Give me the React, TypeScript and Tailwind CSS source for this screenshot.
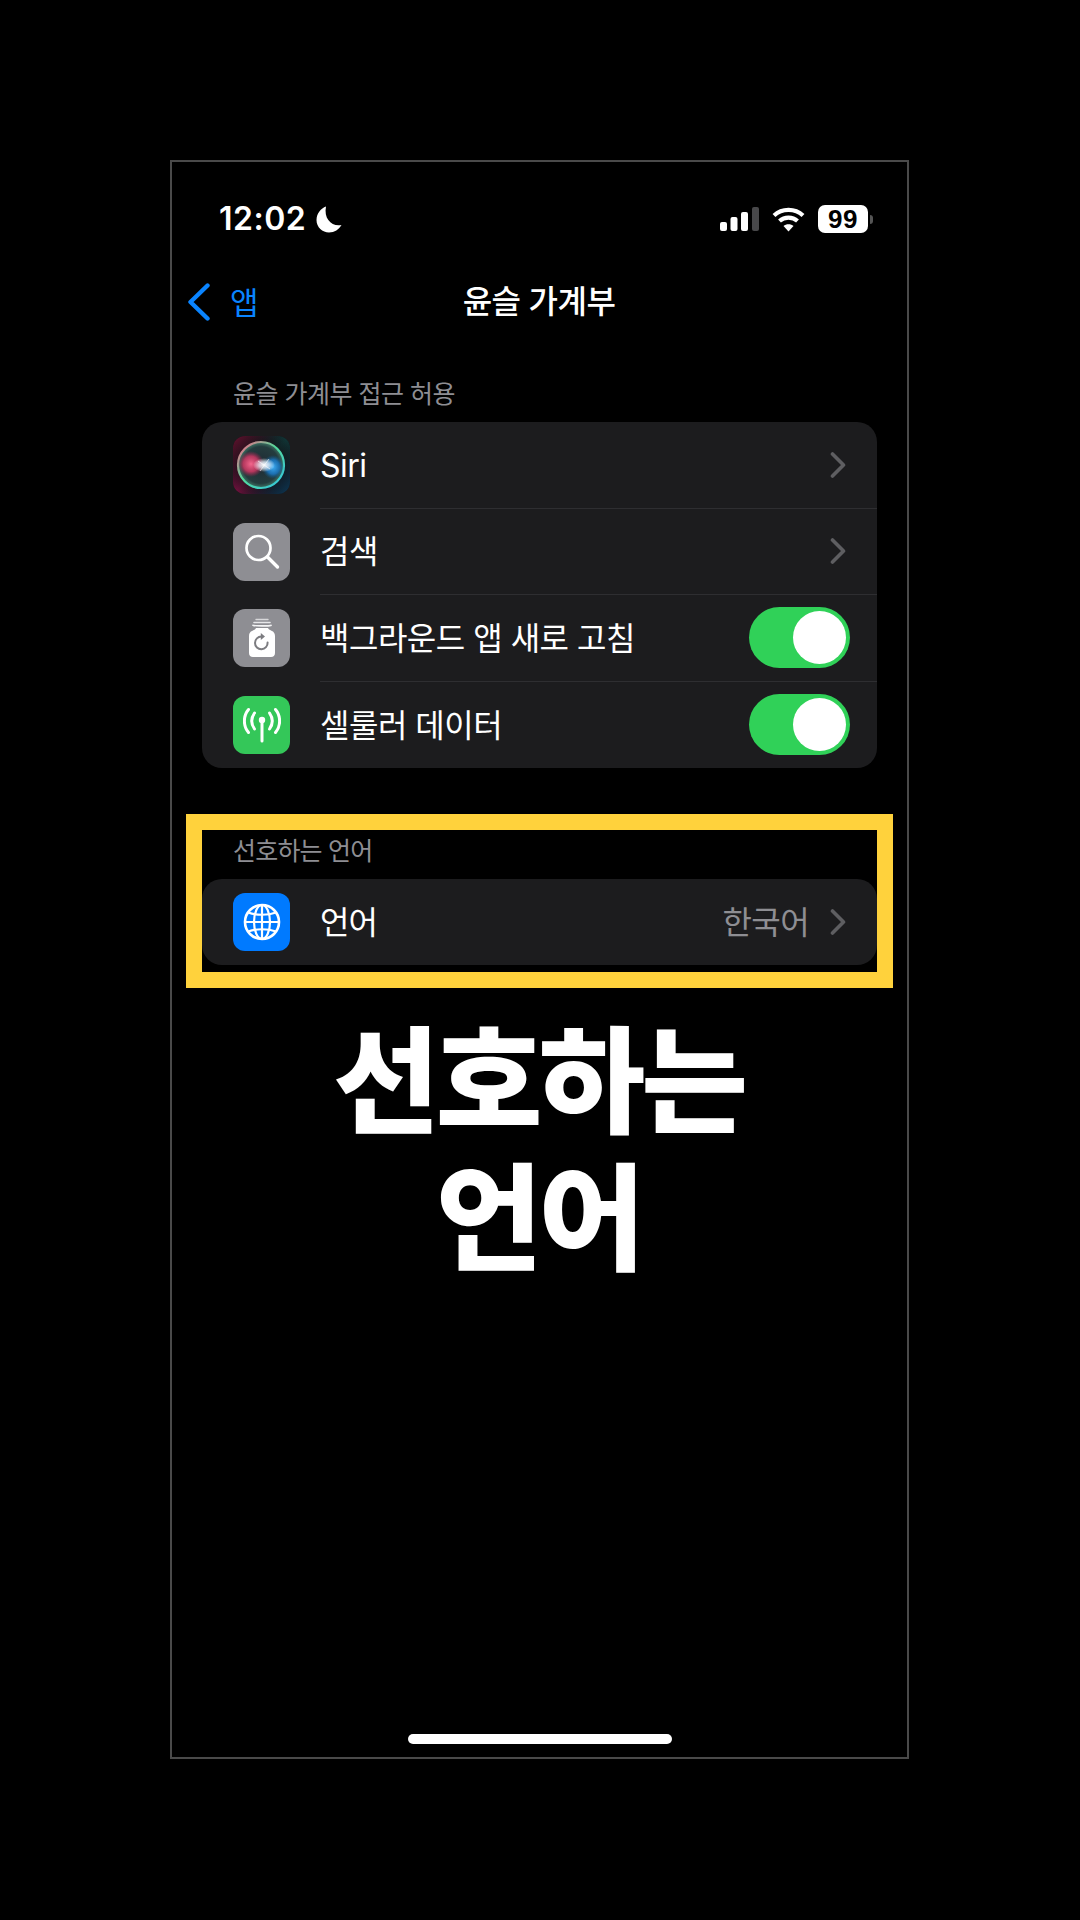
import React from "react";

const font = "font-['Inter','Noto_Sans_CJK_KR',sans-serif]";

function Chevron() {
  return (
    <svg width="16" height="26" viewBox="0 0 16 26" fill="none" className="shrink-0">
      <path d="M2.5 2 L13.5 13 L2.5 24" stroke="#5e5e61" strokeWidth="3.6" strokeLinecap="round" strokeLinejoin="round" />
    </svg>
  );
}

function Toggle() {
  return (
    <div className="w-[101px] h-[61px] rounded-full bg-[#30d158] flex items-center justify-end pr-[4px] shrink-0">
      <div className="w-[53px] h-[53px] rounded-full bg-white" />
    </div>
  );
}

function SiriIcon() {
  return (
    <svg width="57" height="58" viewBox="0 0 57 58">
      <defs>
        <linearGradient id="sb2" x1="0" y1="1" x2="1" y2="0">
          <stop offset="0" stopColor="#8a1048" />
          <stop offset="0.5" stopColor="#101014" stopOpacity="0" />
          <stop offset="1" stopColor="#0f4040" />
        </linearGradient>
        <linearGradient id="sb3" x1="0" y1="0" x2="1" y2="1">
          <stop offset="0" stopColor="#6a1030" />
          <stop offset="0.5" stopColor="#101014" stopOpacity="0" />
          <stop offset="1" stopColor="#0c3a5a" />
        </linearGradient>
        <linearGradient id="sr" x1="0" y1="0" x2="1" y2="1">
          <stop offset="0" stopColor="#ff5c84" />
          <stop offset="0.45" stopColor="#55d89a" />
          <stop offset="1" stopColor="#2fc4e4" />
        </linearGradient>
        <radialGradient id="sp">
          <stop offset="0" stopColor="#ff6a92" stopOpacity="0.95" />
          <stop offset="0.6" stopColor="#d83866" stopOpacity="0.8" />
          <stop offset="1" stopColor="#b02050" stopOpacity="0" />
        </radialGradient>
        <radialGradient id="sc">
          <stop offset="0" stopColor="#40b4ff" stopOpacity="0.95" />
          <stop offset="0.6" stopColor="#1a7ccc" stopOpacity="0.8" />
          <stop offset="1" stopColor="#0a5a90" stopOpacity="0" />
        </radialGradient>
        <radialGradient id="sw">
          <stop offset="0" stopColor="#ffffff" />
          <stop offset="0.45" stopColor="#eef6ff" stopOpacity="0.75" />
          <stop offset="1" stopColor="#ffffff" stopOpacity="0" />
        </radialGradient>
        <radialGradient id="si">
          <stop offset="0" stopColor="#1f2a34" />
          <stop offset="0.8" stopColor="#243c3e" />
          <stop offset="1" stopColor="#3f7a68" />
        </radialGradient>
      </defs>
      <rect width="57" height="58" rx="12" fill="#141418" />
      <rect width="57" height="58" rx="12" fill="url(#sb2)" />
      <rect width="57" height="58" rx="12" fill="url(#sb3)" />
      <circle cx="28" cy="29" r="23" fill="url(#si)" stroke="url(#sr)" strokeWidth="2.2" />
      <ellipse cx="18" cy="28" rx="13" ry="13" fill="url(#sp)" />
      <ellipse cx="40" cy="31" rx="11" ry="12" fill="url(#sc)" />
      <ellipse cx="31" cy="29" rx="11" ry="7" fill="url(#sw)" />
      <path d="M25 25 L37 33 M36 23 L27 35" stroke="#fff" strokeWidth="1" opacity="0.6" />
    </svg>
  );
}

function SearchIcon() {
  return (
    <div className="w-[57px] h-[58px] rounded-[12px] bg-[#8e8e93] flex items-center justify-center">
      <svg width="36" height="36" viewBox="0 0 36 36" fill="none" stroke="#fff" strokeLinecap="round">
        <circle cx="14.5" cy="14" r="12" strokeWidth="2.7" />
        <path d="M23.5 23 L33.5 33" strokeWidth="3.4" />
      </svg>
    </div>
  );
}

function RefreshIcon() {
  return (
    <div className="w-[57px] h-[58px] rounded-[12px] bg-[#8e8e93] flex items-center justify-center">
      <svg width="30" height="40" viewBox="0 0 30 40" fill="none">
        <path d="M9 1.5 H21" stroke="#d8d8da" strokeWidth="1.4" strokeLinecap="round" />
        <path d="M7 4.5 H23" stroke="#e8e8ea" strokeWidth="1.6" strokeLinecap="round" />
        <path d="M6 7.5 C6 8 24 8 24 7.5" stroke="#f4f4f5" strokeWidth="1.8" strokeLinecap="round" />
        <path d="M9 10 H21 C22 13 28 12 28 18 V35 C28 37.5 26.5 39 24 39 H6 C3.5 39 2 37.5 2 35 V18 C2 12 8 13 9 10 Z" fill="#fff" />
        <path d="M20.6 24.5 A6.3 6.3 0 1 1 14.5 18.6" stroke="#7c7c80" strokeWidth="2" strokeLinecap="round" />
        <path d="M13.8 15 L18 18.6 L13.8 22 Z" fill="#7c7c80" />
      </svg>
    </div>
  );
}

function CellIcon() {
  return (
    <div className="w-[57px] h-[58px] rounded-[12px] bg-[#34c759] flex items-center justify-center">
      <svg width="38" height="36" viewBox="0 0 38 36" fill="none" stroke="#fff" strokeLinecap="round">
        <circle cx="19" cy="13" r="3.2" fill="#fff" stroke="none" />
        <path d="M19 14 V34" strokeWidth="3" />
        <path d="M11.5 6 C8 11 8 17 11.5 22" strokeWidth="3" />
        <path d="M26.5 6 C30 11 30 17 26.5 22" strokeWidth="3" />
        <path d="M5.5 2.5 C0 9 0 19 5.5 25.5" strokeWidth="3" />
        <path d="M32.5 2.5 C38 9 38 19 32.5 25.5" strokeWidth="3" />
      </svg>
    </div>
  );
}

function GlobeIcon() {
  return (
    <div className="w-[57px] h-[58px] rounded-[12px] bg-[#007aff] flex items-center justify-center">
      <svg width="38" height="38" viewBox="0 0 38 38" fill="none" stroke="#fff" strokeWidth="2.2">
        <circle cx="19" cy="19" r="17" strokeWidth="2.6" />
        <ellipse cx="19" cy="19" rx="8" ry="17" />
        <path d="M19 2 V36 M2 19 H36" />
        <path d="M5 9.5 C13 12.5 25 12.5 33 9.5 M5 28.5 C13 25.5 25 25.5 33 28.5" />
      </svg>
    </div>
  );
}

function Row({
  icon,
  label,
  right,
  divider = true,
}: {
  icon: React.ReactNode;
  label: string;
  right: React.ReactNode;
  divider?: boolean;
}) {
  return (
    <div className="h-[86.5px] flex items-center">
      <div className="w-[118px] pl-[30px] shrink-0">{icon}</div>
      <div className={`flex-1 h-full flex items-center justify-between border-[#2e2e31] ${divider ? "border-b" : ""}`}>
        <span className="text-[32px] leading-none text-white tracking-[-0.5px] pt-[2px]">{label}</span>
        {right}
      </div>
    </div>
  );
}

export default function App() {
  return (
    <div className={`w-[1080px] h-[1920px] bg-black pt-[160px] pl-[170px] ${font}`}>
      <div className="w-[739px] h-[1599px] border-2 border-[#4a4a4a] flex flex-col">
        {/* status bar */}
        <div className="h-[56px] mt-[29px] flex items-center justify-between pl-[47px] pr-[34px]">
          <div className="flex items-center gap-[10px]">
            <span className="text-[32px] font-semibold leading-none text-white tracking-[0.5px]">12:02</span>
            <svg width="26" height="27" viewBox="0 0 26 27">
              <path d="M10 0.5 C5 2.5 0.5 7 0.5 14 C0.5 21.5 6.5 26.5 13 26.5 C18.5 26.5 23 23.5 25.5 19 C16 21 7.5 13 10 0.5 Z" fill="#fff" />
            </svg>
          </div>
          <div className="flex items-center">
            <svg width="40" height="25" viewBox="0 0 40 25" className="mr-[12px]">
              <rect x="0" y="15" width="7" height="9" rx="2" fill="#fff" />
              <rect x="10.5" y="10" width="7" height="14" rx="2" fill="#fff" />
              <rect x="21" y="5" width="7" height="19" rx="2" fill="#fff" />
              <rect x="32" y="0" width="7" height="24" rx="2" fill="#48484a" />
            </svg>
            <svg width="33" height="25" viewBox="0 0 33 25" fill="none" stroke="#fff" strokeWidth="4.2" className="mr-[13px]">
              <path d="M2 8.5 C10 1 23 1 31 8.5" />
              <path d="M7.5 14 C12.5 9.5 20.5 9.5 25.5 14" />
              <path d="M16.5 24.5 L11.5 19 C14 16.8 19 16.8 21.5 19 Z" fill="#fff" stroke="none" />
            </svg>
            <div className="w-[50px] h-[28px] rounded-[7px] bg-white flex items-center justify-center">
              <span className="text-[26px] font-bold leading-none text-black font-['Liberation_Sans',sans-serif] tracking-[0.5px]">99</span>
            </div>
            <div className="w-[3px] h-[9px] rounded-r-full bg-[#555] ml-[2px]" />
          </div>
        </div>

        {/* nav bar */}
        <div className="relative h-[64px] mt-[23px] flex items-center justify-center">
          <div className="absolute left-[15px] top-0 h-full flex items-center gap-[19px]">
            <svg width="24" height="38" viewBox="0 0 24 38" fill="none">
              <path d="M20.5 2.5 L3.5 19 L20.5 35.5" stroke="#0a84ff" strokeWidth="4.4" strokeLinecap="round" strokeLinejoin="round" />
            </svg>
            <span className="text-[31px] leading-none text-[#0a84ff]">앱</span>
          </div>
          <span className="text-[32px] font-medium leading-none text-white tracking-[-0.5px] pr-[1px]">윤슬 가계부</span>
        </div>

        {/* section 1 */}
        <div className="mt-[42px] pl-[61px] h-[36px] flex items-center text-[25px] leading-none text-[#8e8e93] tracking-[-0.5px]">
          윤슬 가계부 접근 허용
        </div>
        <div className="mt-[10px] ml-[30px] w-[675px] bg-[#1c1c1e] rounded-[20px] overflow-hidden">
          <Row icon={<div className="ml-px"><SiriIcon /></div>} label="Siri" right={<div className="pr-[31px]"><Chevron /></div>} />
          <Row icon={<div className="ml-px"><SearchIcon /></div>} label="검색" right={<div className="pr-[31px]"><Chevron /></div>} />
          <Row icon={<div className="ml-px"><RefreshIcon /></div>} label="백그라운드 앱 새로 고침" right={<div className="pr-[27px]"><Toggle /></div>} />
          <Row icon={<div className="ml-px"><CellIcon /></div>} label="셀룰러 데이터" right={<div className="pr-[27px]"><Toggle /></div>} divider={false} />
        </div>

        {/* highlighted section */}
        <div className="mt-[46px] ml-[14px] w-[707px] h-[174px] border-[16px] border-[#ffd23c]">
          <div className="h-[49px] pl-[31px] pb-[7px] flex items-center text-[25px] leading-none text-[#8e8e93] tracking-[-0.8px]">
            선호하는 언어
          </div>
          <div className="h-[86px] bg-[#1c1c1e] rounded-[20px] flex items-center">
            <div className="w-[118px] pl-[31px] shrink-0"><GlobeIcon /></div>
            <div className="flex-1 flex items-center justify-between pr-[31px]">
              <span className="text-[32px] leading-none text-white tracking-[-1px] pt-[2px]">언어</span>
              <div className="flex items-center gap-[21px]">
                <span className="text-[32px] leading-none text-[#8e8e93] tracking-[-0.6px] pt-[2px]">한국어</span>
                <Chevron />
              </div>
            </div>
          </div>
        </div>

        {/* big caption */}
        <div className="mt-[26px] pr-[2px] text-center text-[116px] font-black leading-[137px] text-white tracking-[-4px]">
          <div>선호하는</div>
          <div>언어</div>
        </div>

        {/* home indicator */}
        <div className="mt-auto mb-[13px] flex justify-center">
          <div className="w-[264px] h-[10px] rounded-full bg-white" />
        </div>
      </div>
    </div>
  );
}
